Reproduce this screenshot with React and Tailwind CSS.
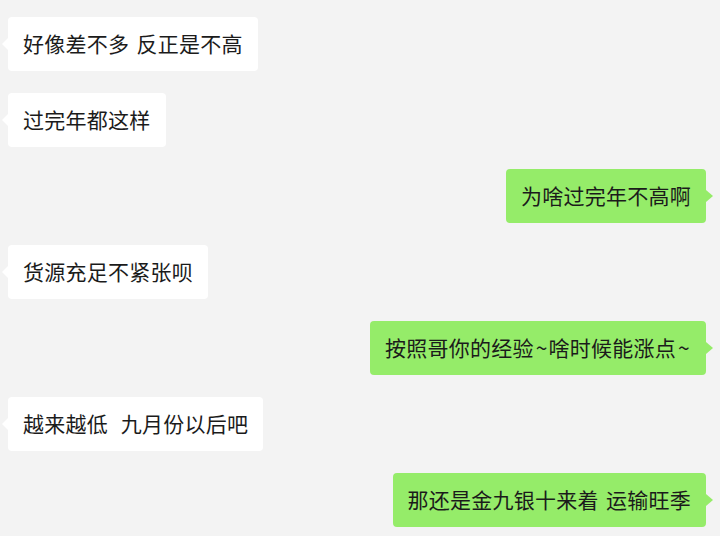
import React from 'react';

// wider spaces and tildes, to match the original font's metrics
const messages = [
    { side: 'left', text: '好像差不多\u2004反正是不高' },
    { side: 'left', text: '过完年都这样' },
    { side: 'right', text: '为啥过完年不高啊' },
    { side: 'left', text: '货源充足不紧张呗' },
    { side: 'right', text: '按照哥你的经验~啥时候能涨点~' },
    { side: 'left', text: '越来越低\u2004\u2005九月份以后吧' },
    { side: 'right', text: '那还是金九银十来着\u2004运输旺季' },
];

function renderText(text) {
    return text.split('~').map((part, i, arr) => (
        <React.Fragment key={i}>
            {part}
            {i < arr.length - 1 && <span className="ml-[2px] mr-[1px]">~</span>}
        </React.Fragment>
    ));
}

function Bubble({ side, text }) {
    const mine = side === 'right';
    return (
        <div className={mine ? 'flex justify-end pr-[14px]' : 'flex justify-start pl-[8px]'}>
            <div
                className={
                    'relative h-[54px] flex items-center px-[15px] rounded-[4px] text-[21px] tracking-[0.25px] text-[#1b1b1b] whitespace-pre ' +
                    (mine ? 'bg-[#95ec69]' : 'bg-white')
                }
            >
                <span>{renderText(text)}</span>
                {mine ? (
                    <span className="absolute right-[-7px] top-1/2 -translate-y-1/2 w-0 h-0 border-y-[6px] border-y-transparent border-l-[7px] border-l-[#95ec69]" />
                ) : (
                    <span className="absolute left-[-6px] top-1/2 -translate-y-1/2 w-0 h-0 border-y-[6px] border-y-transparent border-r-[6px] border-r-white" />
                )}
            </div>
        </div>
    );
}

export default function App() {
    return (
        <div
            className="w-[720px] h-[536px] overflow-hidden bg-[#f3f3f3] pt-[17px] flex flex-col gap-[22px]"
            style={{ fontFamily: '"Noto Sans CJK SC", "Noto Sans", sans-serif' }}
        >
            {messages.map((m, i) => (
                <Bubble key={i} side={m.side} text={m.text} />
            ))}
        </div>
    );
}
